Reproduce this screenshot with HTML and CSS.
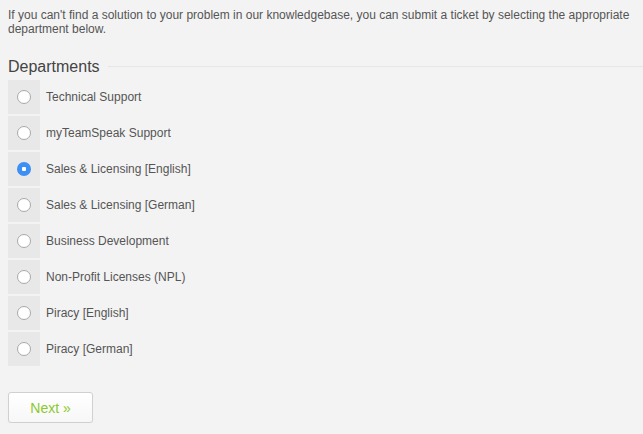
FILE: index.html
```html
<!DOCTYPE html>
<html>
<head>
<meta charset="utf-8">
<link rel="stylesheet" href="styles.css">
</head>
<body>
<div class="page">
  <p class="intro">If you can't find a solution to your problem in our knowledgebase, you can submit a ticket by selecting the appropriate department below.</p>
  <div class="legend"><span class="legend-text">Departments</span><span class="legend-line"></span></div>
  <div class="list">
    <label class="row"><span class="cell"><input type="radio" name="dep" class="radio"></span><span class="label">Technical Support</span></label>
    <label class="row"><span class="cell"><input type="radio" name="dep" class="radio"></span><span class="label">myTeamSpeak Support</span></label>
    <label class="row"><span class="cell"><input type="radio" name="dep" class="radio" checked></span><span class="label">Sales &amp; Licensing [English]</span></label>
    <label class="row"><span class="cell"><input type="radio" name="dep" class="radio"></span><span class="label">Sales &amp; Licensing [German]</span></label>
    <label class="row"><span class="cell"><input type="radio" name="dep" class="radio"></span><span class="label">Business Development</span></label>
    <label class="row"><span class="cell"><input type="radio" name="dep" class="radio"></span><span class="label">Non-Profit Licenses (NPL)</span></label>
    <label class="row"><span class="cell"><input type="radio" name="dep" class="radio"></span><span class="label">Piracy [English]</span></label>
    <label class="row"><span class="cell"><input type="radio" name="dep" class="radio"></span><span class="label">Piracy [German]</span></label>
  </div>
  <button class="next" type="button">Next »</button>
</div>
</body>
</html>
```
FILE: styles.css
```css
html, body {
  margin: 0;
  padding: 0;
  background: #f3f3f3;
}
body {
  font-family: "Liberation Sans", Arial, Helvetica, sans-serif;
  color: #555;
}
.page {
  padding: 8px 0 0 8px;
}
.intro {
  margin: 0;
  font-size: 12px;
  line-height: 14px;
  color: #555;
  padding-right: 8px;
}
.legend {
  display: flex;
  align-items: center;
  margin-top: 21px;
  height: 20px;
  margin-bottom: 3px;
}
.legend-text {
  font-size: 16px;
  color: #444;
  line-height: 20px;
}
.legend-line {
  flex: 1;
  height: 1px;
  background: #e6e6e6;
  margin-left: 8px;
  margin-top: -1px;
}
.list {
  display: flex;
  flex-direction: column;
  gap: 2px;
}
.row {
  display: flex;
  align-items: center;
  height: 34px;
}
.cell {
  width: 32px;
  height: 34px;
  background: #e8e8e9;
  display: flex;
  align-items: center;
  justify-content: center;
}
.radio {
  -webkit-appearance: none;
  appearance: none;
  margin: 0;
  width: 14px;
  height: 14px;
  border-radius: 50%;
  border: 1px solid #a9a9a9;
  background: #fff;
  box-sizing: border-box;
}
.radio:checked {
  border: none;
  background: radial-gradient(circle, #fff 0 2px, #3d8ff5 2.5px);
}
.label {
  margin-left: 6px;
  font-size: 12px;
  color: #555;
}
.next {
  margin-top: 26px;
  width: 85px;
  height: 31px;
  border: 1px solid #cfd0d0;
  border-radius: 3px;
  background: linear-gradient(#ffffff, #f7f7f7);
  color: #8cc92b;
  font-family: "Liberation Sans", Arial, sans-serif;
  font-size: 14px;
  padding: 0;
  box-shadow: 0 1px 1px rgba(0,0,0,0.05);
}
```
